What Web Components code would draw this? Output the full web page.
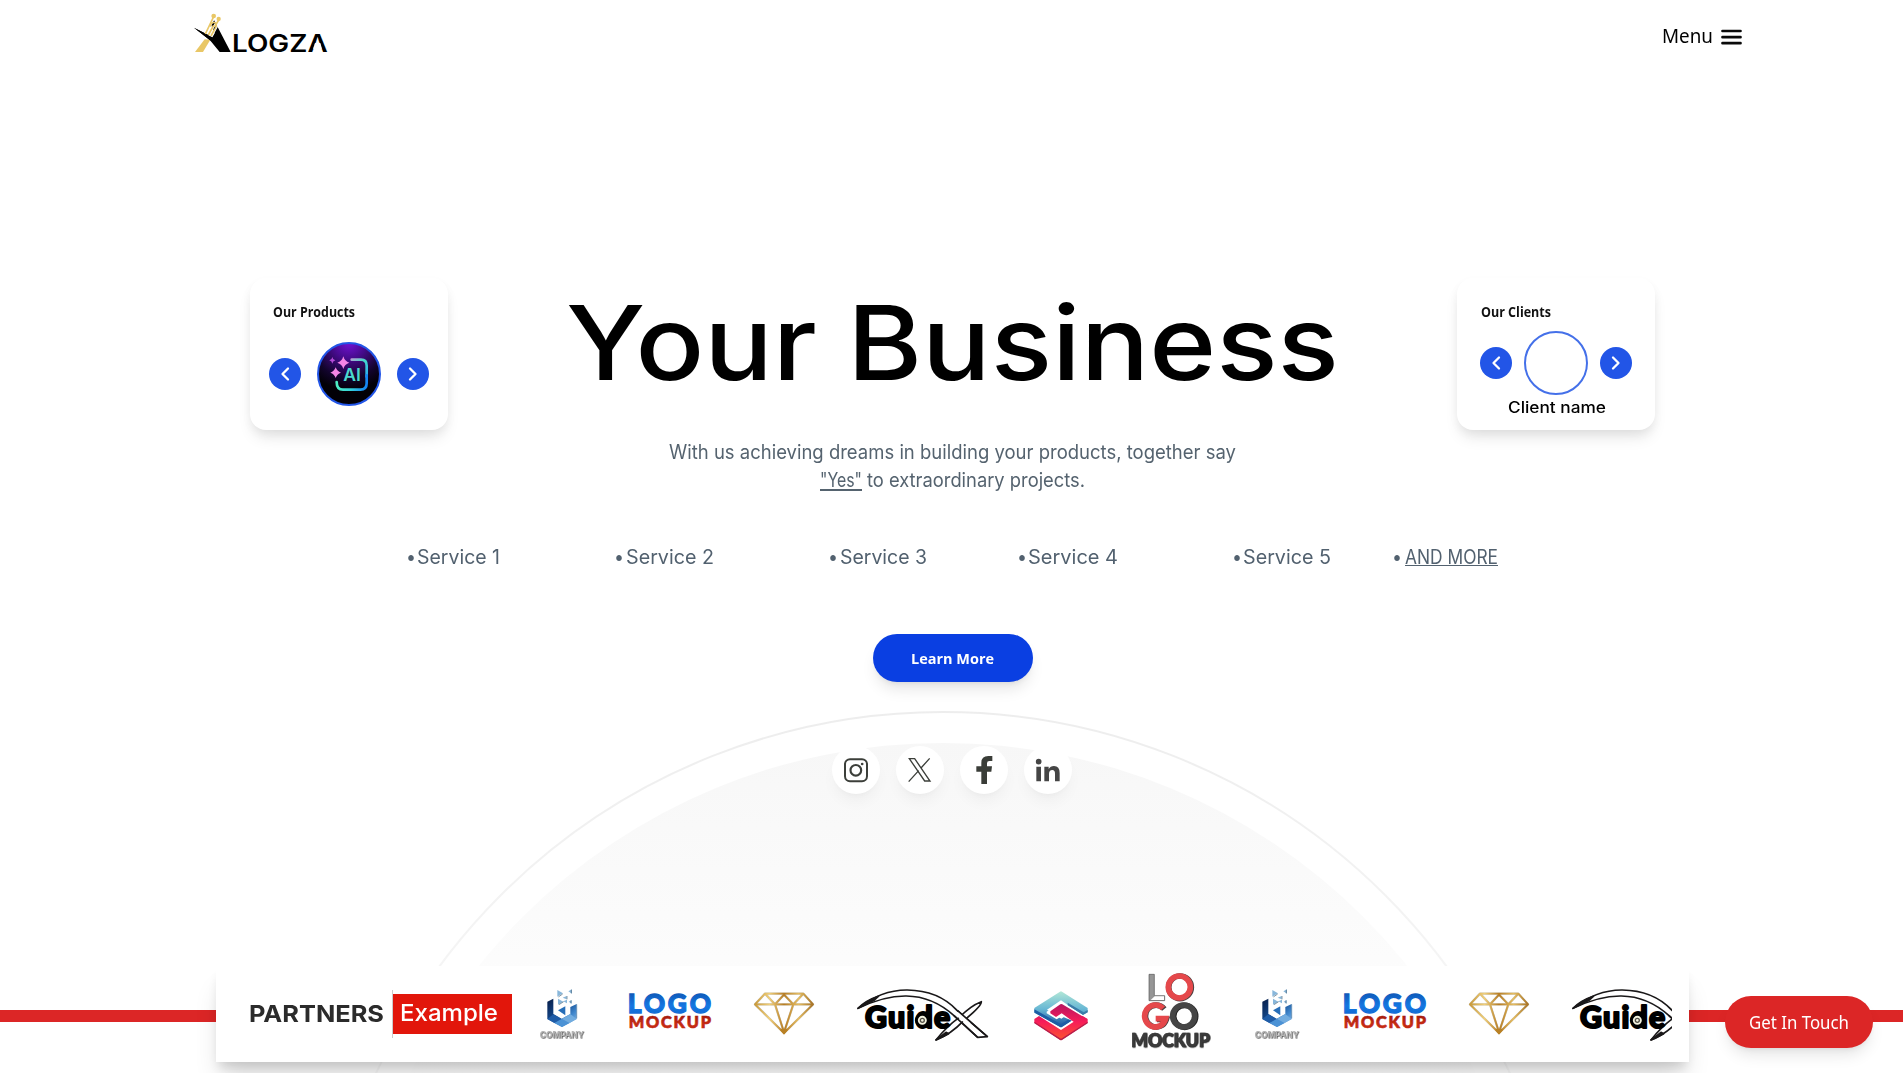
<!DOCTYPE html>
<html lang="en">
<head>
<meta charset="utf-8">
<title>Alogza</title>
<style>
html,body{margin:0;background:#fff}
body{width:1903px;height:1073px;overflow:hidden;font-family:Inter,"Liberation Sans",sans-serif}
</style>
</head>
<body>
<alogza-page></alogza-page>
<script>
const define = (name, html, setup) => customElements.define(name, class extends HTMLElement {
  connectedCallback() {
    if (this.shadowRoot) return;
    const root = this.attachShadow({ mode: 'open' });
    const t = document.createElement('template');
    t.innerHTML = typeof html === 'function' ? html(this) : html;
    root.append(document.importNode(t.content, true));
    if (setup) setup(this, root);
  }
});

/* A single line of text scaled horizontally to the width given in its attribute */
define('fit-text', `<style>
:host{display:block;white-space:nowrap;flex:none}
span{display:inline-block;transform-origin:0 50%;vertical-align:top}
</style><span><slot></slot></span>`, (host, root) => {
  const w = parseFloat(host.getAttribute('w'));
  const s = root.querySelector('span');
  const n = s.getBoundingClientRect().width;
  host.style.width = w + 'px';
  if (n) s.style.transform = `scaleX(${w / n})`;
});

define('site-header', `<style>
:host{display:flex;justify-content:space-between;height:74px;padding:0 161px 0 194px;box-sizing:border-box}
button{all:unset;display:flex;align-items:center;gap:8px;height:73px;font:400 19px/28px "Noto Sans","Open Sans",sans-serif;color:#000}
fit-text{margin-top:-2px}
</style>
<svg width="134" height="70" viewBox="42 0 402 210">
<path d="M74 118L45 156H69L91 119Z" fill="#e9c766"/>
<path d="M42 83L97 112L104 100L91 68L100 56L152 156H119L90 121Z" fill="#000"/>
<path d="M78 102L102 56M86 106L106 72M95 109L112 78" stroke="#fff" stroke-width="5"/>
<path d="M42 83L84 104L104 128L88 119Z"/>
<path d="M76 102L101 50M85 105L101 76M93 108L105 86M104 80L116 60" stroke="#e9c766" stroke-width="5" fill="none"/>
<path d="M91 80Q93 67 103 67Q113 73 106 86" stroke="#e9c766" stroke-width="4" fill="none"/>
<circle cx="101" cy="48" r="7" fill="#e9c766"/><circle cx="116" cy="57" r="6.500" fill="#e9c766"/>
<text x="156" y="155" textLength="287" lengthAdjust="spacingAndGlyphs" font-family="Inter,sans-serif" font-weight="600" font-size="72">LOGZA</text>
<path d="M405 129H421L426 146H399Z" fill="#fff"/>
</svg>
<button><fit-text w="51">Menu</fit-text>
<svg width="21" height="16" viewBox="0 0 21 16"><path d="M1.5 2H19.5M1.5 8.2H19.5M1.5 14.2H19.5" stroke="#0a0a0a" stroke-width="2.7" stroke-linecap="round"/></svg></button>`);

define('round-arrow', h => `<style>
:host{display:grid;place-items:center;width:32px;height:32px;border-radius:50%;background:#2255e7}
</style><svg width="32" height="32" viewBox="0 0 32 32"><path d="${h.getAttribute('dir') === 'prev' ? 'M19 10.500L13.500 16L19 21.500' : 'M13 10.500L18.500 16L13 21.500'}" fill="none" stroke="#fff" stroke-width="2.3" stroke-linecap="round" stroke-linejoin="round"/></svg>`);

define('carousel-card', h => `<style>
:host{display:flex;flex-direction:column;width:198.5px;height:152px;border-radius:16px;background:#fff;box-shadow:0 10px 15px -3px rgba(0,0,0,.1),0 4px 12px -2px rgba(0,0,0,.06);box-sizing:border-box;padding-top:25px}
.t{font:700 14px/18px "Open Sans","Noto Sans",sans-serif;color:#111;padding-left:var(--tl,23.5px)}
.row{display:flex;align-items:center;justify-content:center;gap:var(--gap,16px);margin-top:var(--top,21px);margin-left:var(--shift,0)}
</style><div class="t"><fit-text w="${h.getAttribute('title-width')}">${h.getAttribute('heading')}</fit-text></div>
<div class="row"><round-arrow dir="prev"></round-arrow><slot></slot><round-arrow dir="next"></round-arrow></div>
<slot name="caption"></slot>`);

define('ai-picture', `<style>:host{display:block;width:64px;height:64px}svg{display:block}</style>
<svg width="64" height="64" viewBox="259 216 192 192"><defs>
<radialGradient id="b" gradientUnits="userSpaceOnUse" cx="355" cy="216" r="145"><stop offset="0" stop-color="#7512d8"/><stop offset=".35" stop-color="#460b8c"/><stop offset=".75" stop-color="#12042c"/><stop offset="1" stop-color="#020006"/></radialGradient>
<linearGradient id="g" gradientUnits="userSpaceOnUse" x1="340" y1="270" x2="400" y2="362"><stop offset="0" stop-color="#e58bd8"/><stop offset=".3" stop-color="#45d8c9"/><stop offset=".65" stop-color="#2fb3ec"/><stop offset="1" stop-color="#1686f2"/></linearGradient>
<linearGradient id="l" gradientUnits="userSpaceOnUse" x1="315" y1="330" x2="408" y2="340"><stop offset="0" stop-color="#4ff0c0"/><stop offset=".5" stop-color="#36d4da"/><stop offset="1" stop-color="#1484f5"/></linearGradient></defs>
<circle cx="355" cy="312" r="93" fill="url(#b)" stroke="#2255e7" stroke-width="6"/>
<path d="M363 269H391Q408 269 408 287V320" fill="none" stroke="url(#g)" stroke-width="8" stroke-linecap="round"/>
<path d="M408 316V340Q408 359 389 359H337Q318 359 318 336" fill="none" stroke="url(#l)" stroke-width="8" stroke-linecap="round"/>
<path d="M338 259Q342 274 356 278Q342 282 338 297Q334 282 320 278Q334 274 338 259ZM315 292Q319 304 331 308Q319 312 315 324Q311 312 299 308Q311 304 315 292Z" fill="#f585e6"/>
<path d="M305 261Q306 269 314 271Q306 273 305 281Q304 273 296 271Q304 269 305 261Z" fill="#b44bd8"/>
<text x="338" y="333" textLength="53" lengthAdjust="spacingAndGlyphs" font-family="Inter,sans-serif" font-weight="600" font-size="51" fill="#4bd9cf">AI</text>
</svg>`);

define('empty-avatar', `<style>:host{display:block;width:64px;height:64px;border:2px solid #4470e9;border-radius:50%;box-sizing:border-box}</style>`);

define('hero-copy', `<style>
:host{display:flex;flex-direction:column;align-items:center}
h1{margin:0;font:500 103px/129px Inter,sans-serif;color:#000}
p{margin:31px 0 0;display:flex;flex-direction:column;align-items:center;font:400 19.5px/28px Inter,sans-serif;color:#55636f}
.l{display:flex;gap:5px}u{text-underline-offset:2px;text-decoration-thickness:1.5px;text-decoration-skip-ink:none}
</style><h1><fit-text w="773">Your Business</fit-text></h1>
<p><fit-text w="567">With us achieving dreams in building your products, together say</fit-text>
<span class="l"><fit-text w="42"><u>"Yes"</u></fit-text><fit-text w="218">to extraordinary projects.</fit-text></span></p>`);

define('service-item', h => `<style>
:host{display:flex;align-items:center;height:30px;color:#52616f;font:400 19.5px/28px Inter,sans-serif}
i{font-style:normal;width:5.5px;margin-right:var(--g,4.5px);flex:none}
i fit-text{margin:1px 0 0 -2px}
u{text-underline-offset:2px;text-decoration-thickness:1.5px}
</style><i><fit-text w="10">•</fit-text></i><fit-text w="${h.getAttribute('w')}"><slot></slot></fit-text>`, (host, root) => {
  /* the label is slotted in two levels, so the scale is taken again once it is laid out */
  const f = root.querySelectorAll('fit-text')[1];
  const s = f.shadowRoot && f.shadowRoot.querySelector('span');
  if (s) { s.style.transform = 'none'; s.style.transform = `scaleX(${host.getAttribute('w') / s.getBoundingClientRect().width})`; }
});

define('service-list', `<style>
:host{display:grid;grid-template-columns:208px 214.5px 189px 215px 160px 104px;margin:48.5px 0 0 407.5px}
</style>
<service-item w="83" style="--g:3.5px">Service 1</service-item>
<service-item w="88" style="--g:4.5px">Service 2</service-item>
<service-item w="87" style="--g:4px">Service 3</service-item>
<service-item w="90" style="--g:3px">Service 4</service-item>
<service-item w="88" style="--g:3.5px">Service 5</service-item>
<service-item w="93" style="--g:5.5px"><u>AND MORE</u></service-item>`);

define('pill-button', `<style>
:host{display:flex;align-items:center;justify-content:center;box-sizing:border-box;border-radius:40px;color:#fff;background:var(--bg);box-shadow:0 10px 15px -3px rgba(0,0,0,.1),0 4px 6px -4px rgba(0,0,0,.1)}
</style><slot></slot>`);

define('social-links', `<style>
:host{display:flex;gap:16px}
a{width:48px;height:48px;border-radius:50%;background:#fff;box-shadow:0 10px 15px -3px rgba(0,0,0,.045),0 4px 6px -4px rgba(0,0,0,.04)}
svg{display:block}
</style>
<a><svg width="48" height="48" viewBox="68 378 144 144" fill="none" stroke="#3c3f3a"><rect x="107" y="418" width="66" height="66" rx="15" stroke-width="6"/><circle cx="139.500" cy="451" r="16" stroke-width="6.500"/><circle cx="158.500" cy="432" r="4" fill="#3c3f3a" stroke="none"/></svg></a>
<a><svg width="48" height="48" viewBox="260 378 144 144" fill="none" stroke="#3c3f3a" stroke-width="4"><path d="M300 416H316L362 483H346Z"/><path d="M298 485L328 452M335 444L361 415"/></svg></a>
<a><svg width="48" height="48" viewBox="452 378 144 144"><path d="M516 492V455H501V439H516V428Q516 408 537 408H549V423H540Q533 423 533 430V439H548L546 455H533V492Z" fill="#3a3d38"/></svg></a>
<a><svg width="48" height="48" viewBox="644 378 144 144" fill="#454545"><circle cx="688" cy="425" r="8.500"/><path d="M681 440H695V484H681ZM705 440H718V447Q723 438 734 438Q751 438 751 459V484H737V461Q737 450 729 450Q719 450 719 462V484H705Z"/></svg></a>`);

const company = `<svg width="46" height="96" viewBox="1020 48 138 288"><defs><linearGradient id="c" x1="0" y1="0" x2="1" y2="1"><stop offset="0" stop-color="#071c46"/><stop offset=".45" stop-color="#154b90"/><stop offset=".7" stop-color="#3f86cc"/><stop offset="1" stop-color="#9cc6ec"/></linearGradient></defs>
<path d="M1045 155L1063 146V192L1088 206L1114 192V171L1133 162V207L1089 231L1045 207Z" fill="url(#c)"/>
<path d="M1045 207L1063 193L1088 207L1066 219Z" fill="#1f5ca7"/><path d="M1088 207L1112 219L1089 231L1066 219Z" fill="#4b92d5"/><path d="M1088 207L1114 192L1133 207L1112 219Z" fill="#72acdf"/>
<path d="M1077 181L1099 169V196Z" fill="#276eb8"/>
<path d="M1075 120L1092 130L1075 140ZM1077 146L1093 155L1077 164ZM1091 143L1103 138V148ZM1108 124L1119 118V131ZM1093 154L1104 149V160ZM1109 155L1118 150V161Z" fill="#88b7db"/><path d="M1078 141L1091 132M1080 164L1094 155M1117 119V130M1104 138V148M1116 151V160" stroke="#4d6679" stroke-width="2"/><path d="M1133 163V205" stroke="#6992b8" stroke-width="3"/>
<text x="1022" y="264" textLength="133" lengthAdjust="spacingAndGlyphs" font-family="Inter,sans-serif" font-weight="700" font-size="28" fill="#b4b4b4" style="filter:drop-shadow(2.500px 2px 0 #505050)">COMPANY</text></svg>`;
const mock = `<svg width="82" height="96" viewBox="57 48 246 288"><defs><linearGradient id="m" x1="0" y1="0" x2="0" y2="1"><stop offset="0" stop-color="#0c4ba4"/><stop offset=".6" stop-color="#1477e2"/><stop offset="1" stop-color="#0f65cc"/></linearGradient><linearGradient id="r" x1="0" y1="0" x2="0" y2="1"><stop offset="0" stop-color="#941408"/><stop offset=".6" stop-color="#c42a12"/></linearGradient></defs>
<g font-family="Lato,sans-serif" font-weight="900"><text x="53" y="188" textLength="250" lengthAdjust="spacing" font-size="79" fill="url(#m)" stroke="url(#m)" stroke-width="4">LOGO</text>
<text x="56" y="234" textLength="247" lengthAdjust="spacing" font-size="49" fill="url(#r)" stroke="url(#r)" stroke-width="2">MOCKUP</text></g></svg>`;
const diamond = `<svg width="60" height="96" viewBox="432 48 180 288" fill="none"><defs><linearGradient id="d"><stop offset="0" stop-color="#c99a3c"/><stop offset=".25" stop-color="#f0cf7a"/><stop offset=".5" stop-color="#b77d25"/><stop offset=".75" stop-color="#e5bd62"/><stop offset="1" stop-color="#a87325"/></linearGradient></defs>
<path d="M465 131H580L609 163L522 249L435 163ZM435 163H609.100M465 131L495 163L522 134L550 163L580 131M495 163L522 247L550 163" stroke="#7b7358" stroke-width="7" stroke-linejoin="round" opacity=".4"/>
<path d="M465 131H580L609 163L522 249L435 163ZM435 163H609.100M465 131L495 163L522 134L550 163L580 131M495 163L522 247L550 163" stroke="url(#d)" stroke-width="5.5" stroke-linejoin="round"/><path d="M513 238L522 249L531 238" stroke="#b98125" stroke-width="7"/></svg>`;
const guide = `<svg width="135" height="96" viewBox="741 48 405 288" fill="none" stroke="#1a1819" stroke-width="5" stroke-linejoin="round">
<path d="M744 175Q815 119 892 120Q985 121 1041 181L1132 260L1103 262L1032 197Q968 139 889 138Q823 137 744 175Z"/>
<path d="M978 270Q1022 253 1062 211Q1115 169 1114 155Q1082 167 1048 202Q1010 229 978 270Z" fill="#fff"/>
<path d="M1040 189L1078 223" stroke="#fff" stroke-width="13"/><path d="M1042 181L1132 260M1032 197L1103 262"/>
<path d="M744 175Q768 151 805 139L792 151Z" fill="#1a1819"/><path d="M978 270L1008 247L1016 251Z" fill="#1a1819"/>
<text x="765" y="235" textLength="256" lengthAdjust="spacing" font-family="Lato,sans-serif" font-weight="900" font-size="91" fill="#000" stroke="#000" stroke-width="6">Guide</text>
<circle cx="937" cy="211" r="18" fill="#f4f3df" stroke="#000" stroke-width="9"/><circle cx="937" cy="211" r="6" stroke="#55524a" stroke-width="4"/></svg>`;
const stack = `<svg width="54" height="96" viewBox="104 48 162 288" fill="none" stroke-linejoin="round"><defs><linearGradient id="t" gradientUnits="userSpaceOnUse" x1="185" y1="123" x2="185" y2="232"><stop offset="0" stop-color="#b3e8d7"/><stop offset=".5" stop-color="#67b7d4"/><stop offset="1" stop-color="#164f9c"/></linearGradient><linearGradient id="p" gradientUnits="userSpaceOnUse" x1="185" y1="160" x2="185" y2="270"><stop offset="0" stop-color="#b31561"/><stop offset=".5" stop-color="#f71c59"/><stop offset="1" stop-color="#fb542f"/></linearGradient></defs>
<path d="M105 207L119 198L185 240L250 198L265 207V218L188 269Q185 271 182 269L105 218Z" fill="url(#p)"/>
<path d="M105 215L182 265Q185 267 188 265L265 215V220L188 270Q185 272 182 270L105 220Z" fill="#b71e4d"/>
<path d="M182 125Q185 122 188 125L265 174V187L251 194L202 163L185 151L143 179L186 206L204 194L224 207L185 232L105 187V174Z" fill="url(#t)"/>
<path d="M105 178L185 223L218 201L225 207L188 231Q185 233 182 231L105 188Z" fill="#1d5da5"/><path d="M205 158L253 187L265 180V187L251 195L205 166Z" fill="#3a7ca8"/>
<path d="M142 185L185 155L250 196L232 218L187 199L172 208L142 190Z" fill="#fff"/>
<path d="M153 184L183 163Q186 161 189 163L263 207L235 224L187 190L170 201L153 190Z" fill="url(#p)"/></svg>`;
const big = `<svg width="80" height="96" viewBox="396 48 240 288"><g font-family="Lato,sans-serif" font-weight="900">
<path d="M450 73H466V137H497V152H450Z" fill="#969696" stroke="#555" stroke-width="2"/><path d="M467 139H495V150H455Z" fill="#fff"/>
<g fill="none" stroke-width="17"><circle cx="543" cy="112" r="34" stroke="#4c4042"/><circle cx="541" cy="111" r="33" stroke="#e5484b"/><circle cx="557" cy="199" r="33" stroke="#222"/><circle cx="554" cy="198" r="33" stroke="#454545"/>
<path d="M494 176A32 33 0 1 0 500 207H472" stroke="#4c4042" transform="translate(2 1)"/><path d="M492 175A32 33 0 1 0 500 206H470" stroke="#e5484b"/></g>
<text x="396" y="292" textLength="236" lengthAdjust="spacingAndGlyphs" font-size="56" fill="#3b3b3b" stroke="#3b3b3b" stroke-width="2" style="filter:drop-shadow(2.500px 1.500px 0 #111)">MOCKUP</text></g></svg>`;

[['company', company], ['mockup', mock], ['diamond', diamond], ['guide', guide], ['stack', stack], ['big', big]]
  .forEach(([n, s]) => define('logo-' + n, `<style>:host{display:block;flex:none}svg{display:block;overflow:visible}</style>` + s));

define('partner-bar', `<style>
:host{display:flex;height:107px;padding:0 214px 0 216px;margin-top:172px;background:linear-gradient(#dc2626,#dc2626) 0 44px/100% 12px no-repeat;z-index:1}
.bar{display:flex;align-items:center;width:1473px;height:96px;background:#fff;box-sizing:border-box;padding:0 17px 0 32.5px;box-shadow:0 20px 25px -5px rgba(0,0,0,.14),0 8px 10px -3px rgba(0,0,0,.12)}
.p{font:700 23.5px/30px Inter,sans-serif;color:#2b2b2b}
.e{display:flex;align-items:center;margin-left:8.5px;border-left:1px solid #ccc;height:48px}
.e div{width:112px;height:40px;padding-left:7px;box-sizing:content-box;background:#e2160b;color:#fff;font:500 22.5px/38px Inter,sans-serif}
.logos{display:flex;gap:43px;overflow:hidden;flex:1;min-width:0;padding-left:27px}
logo-mockup{margin-left:.5px}
logo-diamond{margin-left:.5px}
logo-stack{margin-left:-1px}
</style><div class="bar"><fit-text class="p" w="135">PARTNERS</fit-text>
<div class="e"><div><fit-text w="98">Example</fit-text></div></div>
<div class="logos"><logo-company></logo-company><logo-mockup></logo-mockup><logo-diamond></logo-diamond><logo-guide></logo-guide><logo-stack></logo-stack><logo-big></logo-big><logo-company></logo-company><logo-mockup></logo-mockup><logo-diamond></logo-diamond><logo-guide></logo-guide></div></div>`);

define('alogza-page', `<style>
:host{display:flex;flex-direction:column;position:relative;width:1903px;height:1073px;overflow:hidden;background:#fff}
:host>*{flex:none}
.arc{position:absolute;left:0;top:0}
site-header,.hero,service-list,.cta,social-links,partner-bar{position:relative}
.hero{display:flex;justify-content:space-between;align-items:flex-start;height:215px;margin-top:204px;padding:0 248px 0 249.5px}
.cta{width:160px;height:48px;margin:62.500px 0 0 872.5px;--bg:#0a3fe2;font:700 15px/24px "Open Sans","Noto Sans",sans-serif}
social-links{margin:64px 0 0 832.3px}
.clients{--gap:12px;--top:10px;--shift:1px;--tl:24px}
.cap{font:500 15.5px/22px Inter,sans-serif;color:#000;margin:2px 0 0 51px}
.touch{position:absolute;left:1725px;top:996px;width:148px;height:52px;--bg:#dc2626;font:400 17.5px/24px "Noto Sans","Open Sans",sans-serif;z-index:2}
</style>
<svg class="arc" width="1903" height="1073"><defs><linearGradient id="f" gradientUnits="userSpaceOnUse" x1="0" y1="742" x2="0" y2="1073"><stop offset="0" stop-color="#f7f7f7"/><stop offset=".65" stop-color="#fcfcfc"/><stop offset="1" stop-color="#fefefe"/></linearGradient><linearGradient id="o" gradientUnits="userSpaceOnUse" x1="0" y1="711" x2="0" y2="1073"><stop offset="0" stop-color="#ededed"/><stop offset="1" stop-color="#f8f8f8"/></linearGradient></defs>
<circle cx="943" cy="1337.500" r="625.500" fill="none" stroke="url(#o)" stroke-width="2"/><circle cx="943" cy="1338" r="595" fill="url(#f)"/></svg>
<site-header></site-header>
<div class="hero">
<carousel-card heading="Our Products" title-width="82"><ai-picture></ai-picture></carousel-card>
<hero-copy></hero-copy>
<carousel-card class="clients" heading="Our Clients" title-width="70"><empty-avatar></empty-avatar><fit-text class="cap" slot="caption" w="98">Client name</fit-text></carousel-card>
</div>
<service-list></service-list>
<pill-button class="cta"><fit-text w="83">Learn More</fit-text></pill-button>
<social-links></social-links>
<partner-bar></partner-bar>
<pill-button class="touch"><fit-text w="100">Get In Touch</fit-text></pill-button>`);
</script>
</body>
</html>
